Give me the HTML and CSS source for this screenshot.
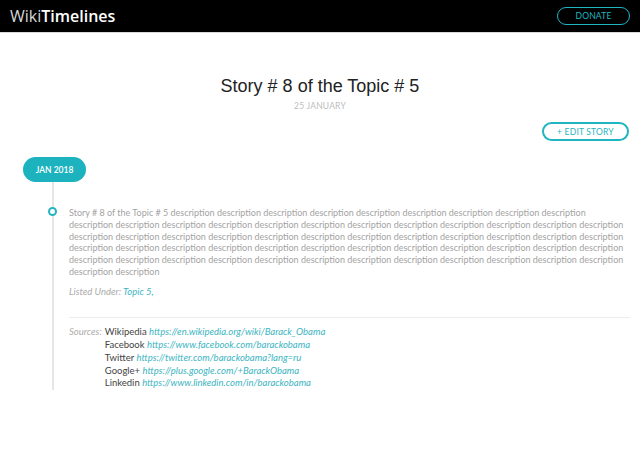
FILE: index.html
```html
<!DOCTYPE html>
<html>
<head>
<meta charset="utf-8">
<link rel="stylesheet" href="styles.css">
</head>
<body>
<header class="topbar">
  <div class="logo"><span class="logo-light">Wiki</span><span class="logo-bold">Timelines</span></div>
  <a class="btn-donate">DONATE</a>
</header>
<main class="page">
  <h1 class="title">Story # 8 of the Topic # 5</h1>
  <div class="date">25 JANUARY</div>
  <div class="actions"><a class="btn-edit">+ EDIT STORY</a></div>
  <div class="pill">JAN 2018</div>
  <div class="timeline">
    <div class="item">
      <span class="dot"></span>
      <p class="desc">Story # 8 of the Topic # 5
description description description description description description description description description description
description description description description description description description description description description
description description description description description description description description description description
description description description description description description description description description description
description description description description description description description description description description
description description description description description description description description description</p>
      <p class="listed"><span class="muted">Listed Under:</span> <a class="link">Topic 5,</a></p>
      <hr class="sep">
      <div class="sources">
        <span class="muted label">Sources:</span>
        <ul class="src-list">
          <li><span class="src-name">Wikipedia</span> <a class="link it">https://en.wikipedia.org/wiki/Barack_Obama</a></li>
          <li><span class="src-name">Facebook</span> <a class="link it">https://www.facebook.com/barackobama</a></li>
          <li><span class="src-name">Twitter</span> <a class="link it">https://twitter.com/barackobama?lang=ru</a></li>
          <li><span class="src-name">Google+</span> <a class="link it">https://plus.google.com/+BarackObama</a></li>
          <li><span class="src-name">Linkedin</span> <a class="link it">https://www.linkedin.com/in/barackobama</a></li>
        </ul>
      </div>
    </div>
  </div>
</main>
</body>
</html>
```

FILE: styles.css
```css
* { box-sizing: border-box; }
html, body { margin: 0; padding: 0; background: #fff; }
body { font-family: "Lato", "Liberation Sans", sans-serif; color: #333; }

.topbar {
  height: 33px;
  background: #000;
  border-bottom: 1px solid #d9d9d9;
  display: flex;
  align-items: center;
  justify-content: space-between;
  padding: 0 10px 0 10px;
}
.logo { font-family: "Open Sans", sans-serif; font-size: 16px; line-height: 20px; margin-top: -1px; }
.logo-light { color: #d8d8d8; font-weight: 400; }
.logo-bold { color: #fff; font-weight: 600; }
.btn-donate {
  width: 73px; height: 18px;
  border: 1.5px solid #1fb5c1;
  border-radius: 10px;
  color: #1fb5c1;
  font-size: 8.5px;
  display: flex; align-items: center; justify-content: center;
  letter-spacing: 0.2px;
  margin-top: -1px;
}

.page { padding-top: 42px; }
.title {
  margin: 0;
  font-family: "Liberation Sans", "Helvetica", sans-serif;
  font-weight: 400;
  font-size: 18px;
  line-height: 22px;
  text-align: center;
  color: #222;
}
.date {
  margin-top: 4px;
  text-align: center;
  font-size: 8.5px;
  line-height: 10px;
  color: #bdbdbd;
  letter-spacing: 0.2px;
}
.actions { display: flex; justify-content: flex-end; padding-right: 11px; margin-top: 11px; }
.btn-edit {
  width: 87px; height: 19px;
  border: 2px solid #1fb5c1;
  border-radius: 10px;
  color: #1fb5c1;
  font-size: 8.5px;
  display: flex; align-items: center; justify-content: center;
  letter-spacing: 0.2px;
}
.pill {
  margin: 16px 0 0 23px;
  width: 63px; height: 25px;
  border-radius: 13px;
  background: #1cb2be;
  color: #fff;
  font-size: 8.5px;
  font-weight: 600;
  display: flex; align-items: center; justify-content: center;
}
.timeline {
  margin: 0 10px 0 52px;
  border-left: 2px solid #e6e6e6;
  padding-left: 15px;
  padding-top: 25px;
}
.item { position: relative; }
.dot {
  position: absolute;
  left: -21px; top: 0px;
  width: 9px; height: 9px;
  border: 2px solid #1fb5c1;
  background: #fff;
  border-radius: 50%;
}
.desc {
  margin: 0;
  font-size: 9px;
  line-height: 11.8px;
  color: #a3a3a3;
}
.listed {
  margin: 8px 0 0 0;
  font-size: 9.5px;
  line-height: 12px;
  font-style: italic;
}
.muted { color: #ababab; font-style: italic; }
.link { color: #3bb4c1; text-decoration: none; }
.it { font-style: italic; }
.sep {
  margin: 19px 0 0 0;
  border: 0;
  border-top: 1px solid #ececec;
  height: 0;
}
.sources {
  display: flex;
  gap: 3px;
  padding-top: 8px;
  font-size: 9.5px;
  line-height: 12.9px;
}
.label { flex: none; }
.src-list { list-style: none; margin: 0; padding: 0; }
.src-name { color: #444; }
```
